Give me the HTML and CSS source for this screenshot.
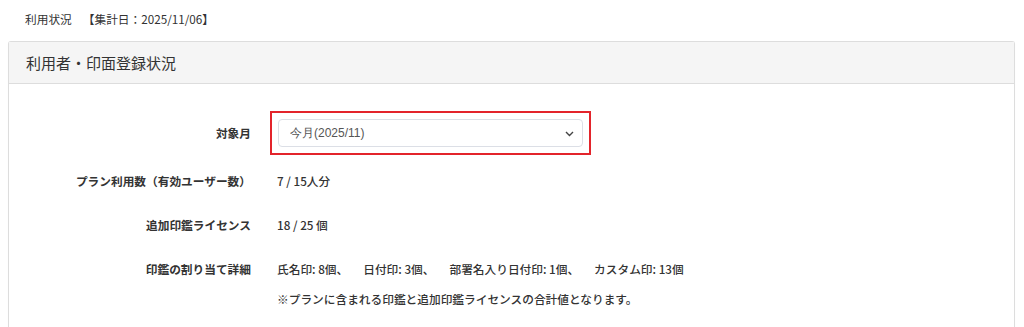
FILE: index.html
```html
<!DOCTYPE html>
<html lang="ja">
<head>
<meta charset="utf-8">
<link rel="stylesheet" href="styles.css">
</head>
<body>
<div class="crumb"><span>利用状況</span><span class="date">【集計日：2025/11/06】</span></div>
<section class="panel">
  <header class="panel-head">利用者・印面登録状況</header>
  <div class="panel-body">
    <div class="form">
      <div class="label label-select">対象月</div>
      <div class="value">
        <div class="select-wrap">
          <select class="month"><option>今月(2025/11)</option></select>
          <svg class="chev" width="9" height="6" viewBox="0 0 9 6"><path d="M1 1 L4.5 4.5 L8 1" fill="none" stroke="#444" stroke-width="1.4"/></svg>
        </div>
      </div>
      <div class="label">プラン利用数（有効ユーザー数）</div>
      <div class="value">7 / 15人分</div>
      <div class="label">追加印鑑ライセンス</div>
      <div class="value">18 / 25 個</div>
      <div class="label">印鑑の割り当て詳細</div>
      <div class="value">
        <div class="items"><span>氏名印: 8個、</span><span>日付印: 3個、</span><span>部署名入り日付印: 1個、</span><span>カスタム印: 13個</span></div>
        <div class="note">※プランに含まれる印鑑と追加印鑑ライセンスの合計値となります。</div>
      </div>
    </div>
  </div>
</section>
</body>
</html>
```
FILE: styles.css
```css
html, body {
  margin: 0;
  background: #fff;
}
body {
  font-family: "Noto Sans CJK JP", "Noto Sans", sans-serif;
  color: #333;
  font-size: 11.7px;
  line-height: 20px;
}
.crumb {
  padding: 9px 0 0 25px;
  height: 32px;
  box-sizing: border-box;
  font-size: 11.7px;
}
.crumb .date {
  margin-left: 11px;
}
.panel {
  margin: 9px 0 0 8px;
  width: 1007px;
  border: 1px solid #ddd;
  border-bottom: none;
  border-radius: 3px 3px 0 0;
  box-shadow: 0 1px 1px rgba(0,0,0,.05);
  height: 290px;
  box-sizing: border-box;
}
.panel-head {
  background: #f5f5f5;
  border-bottom: 1px solid #ddd;
  height: 42px;
  box-sizing: border-box;
  padding: 0 17px;
  font-size: 15px;
  line-height: 41px;
}
.panel-body {
  padding-top: 35px;
}
.form {
  display: grid;
  grid-template-columns: 242px 1fr;
  column-gap: 26px;
  row-gap: 24px;
  align-items: start;
}
.label {
  text-align: right;
  font-weight: bold;
}
.label-select {
  line-height: 28px;
}
.value {
  font-weight: 500;
}
.select-wrap {
  position: relative;
  width: 305px;
  margin-left: 1px;
  outline: 2px solid #e3242b;
  outline-offset: 6px;
}
.month {
  appearance: none;
  -webkit-appearance: none;
  display: block;
  width: 100%;
  height: 28px;
  border: 1px solid #dcdfe6;
  border-radius: 4px;
  background: #fff;
  color: #555;
  font-family: "Liberation Sans", Arial, sans-serif;
  font-size: 12px;
  font-weight: normal;
  padding: 0 11px;
}
.chev {
  position: absolute;
  right: 9px;
  top: 12px;
}
.items span {
  margin-right: 15px;
}
.note {
  margin-top: 10px;
}
```
